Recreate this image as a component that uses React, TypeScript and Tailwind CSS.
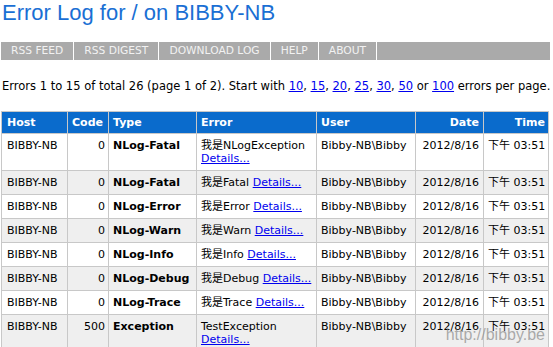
const rows = [
  { code: "0", type: "NLog-Fatal", msg: "我是NLogException", wrap: true },
  { code: "0", type: "NLog-Fatal", msg: "我是Fatal" },
  { code: "0", type: "NLog-Error", msg: "我是Error" },
  { code: "0", type: "NLog-Warn", msg: "我是Warn" },
  { code: "0", type: "NLog-Info", msg: "我是Info" },
  { code: "0", type: "NLog-Debug", msg: "我是Debug" },
  { code: "0", type: "NLog-Trace", msg: "我是Trace" },
  { code: "500", type: "Exception", msg: "TestException", wrap: true },
];

const menu = ["RSS FEED", "RSS DIGEST", "DOWNLOAD LOG", "HELP", "ABOUT"];

const App = () => {
  return (
    <div className="relative h-[347px] overflow-hidden bg-white px-[1px] font-['DejaVu_Sans','Noto_Sans_CJK_TC',sans-serif] text-[11px] text-black">
      <h1 className="ml-[1px] font-['Liberation_Sans',sans-serif] text-[22px] leading-[26px] text-[#1a6fd4]">
        Error Log for / on BIBBY-NB
      </h1>

      {/* Menu bar */}
      <div className="mt-[16px] flex h-[18px] w-[549px] bg-[#aaaaaa] text-[10.7px] leading-[18px] text-[#f2f2f2]">
        {menu.map((m) => (
          <span key={m} className="border-r border-white px-[10px]">
            {m}
          </span>
        ))}
      </div>

      <p className="mt-[19px] ml-[1px] text-[11.5px] leading-[15px] whitespace-nowrap">
        Errors 1 to 15 of total 26 (page 1 of 2). Start with{" "}
        <a className="text-[#0000ee] underline">10</a>,{" "}
        <a className="text-[#0000ee] underline">15</a>,{" "}
        <a className="text-[#0000ee] underline">20</a>,{" "}
        <a className="text-[#0000ee] underline">25</a>,{" "}
        <a className="text-[#0000ee] underline">30</a>,{" "}
        <a className="text-[#0000ee] underline">50</a> or{" "}
        <a className="text-[#0000ee] underline">100</a> errors per page.
      </p>

      <table className="mt-[17px] w-[548px] table-fixed border-collapse leading-[13px]">
        <thead>
          <tr className="bg-[#0a6bcc] font-bold text-white">
            <th className="w-[66px] border border-[#c8c8c8] px-[5px] py-[4px] text-left">Host</th>
            <th className="w-[41px] border border-[#c8c8c8] px-[4px] py-[4px] text-left">Code</th>
            <th className="w-[88px] border border-[#c8c8c8] px-[4px] py-[4px] text-left">Type</th>
            <th className="w-[120px] border border-[#c8c8c8] px-[4px] py-[4px] text-left">Error</th>
            <th className="w-[99px] border border-[#c8c8c8] px-[4px] py-[4px] text-left">User</th>
            <th className="w-[68px] border border-[#c8c8c8] px-[4px] py-[4px] text-right">Date</th>
            <th className="w-[65px] border border-[#c8c8c8] px-[3px] py-[4px] text-right">Time</th>
          </tr>
        </thead>
        <tbody>
          {rows.map((r, i) => (
            <tr key={i} className={i % 2 === 1 || i === 7 ? "bg-[#efefef]" : "bg-white"}>
              <td className="border border-[#c8c8c8] px-[5px] py-[5px] align-top whitespace-nowrap">BIBBY-NB</td>
              <td className="border border-[#c8c8c8] px-[3px] py-[5px] text-right align-top">{r.code}</td>
              <td className="border border-[#c8c8c8] px-[4px] py-[5px] align-top font-bold whitespace-nowrap">{r.type}</td>
              <td className="border border-[#c8c8c8] px-[4px] py-[5px] align-top whitespace-nowrap">
                {r.msg}
                {r.wrap ? <br /> : " "}
                <a className="text-[#0000ee] underline">Details...</a>
              </td>
              <td className="border border-[#c8c8c8] px-[4px] py-[5px] align-top whitespace-nowrap">Bibby-NB\Bibby</td>
              <td className="border border-[#c8c8c8] px-[4px] py-[5px] text-right align-top">2012/8/16</td>
              <td className="border border-[#c8c8c8] px-[4px] py-[5px] align-top whitespace-nowrap">下午 03:51</td>
            </tr>
          ))}
        </tbody>
      </table>

      {/* watermark */}
      <span className="absolute right-[8px] bottom-[0px] font-['Liberation_Sans',sans-serif] text-[16px] text-[#8a8a8a]/70">
        http://bibby.be
      </span>
    </div>
  );
};

export default App;
